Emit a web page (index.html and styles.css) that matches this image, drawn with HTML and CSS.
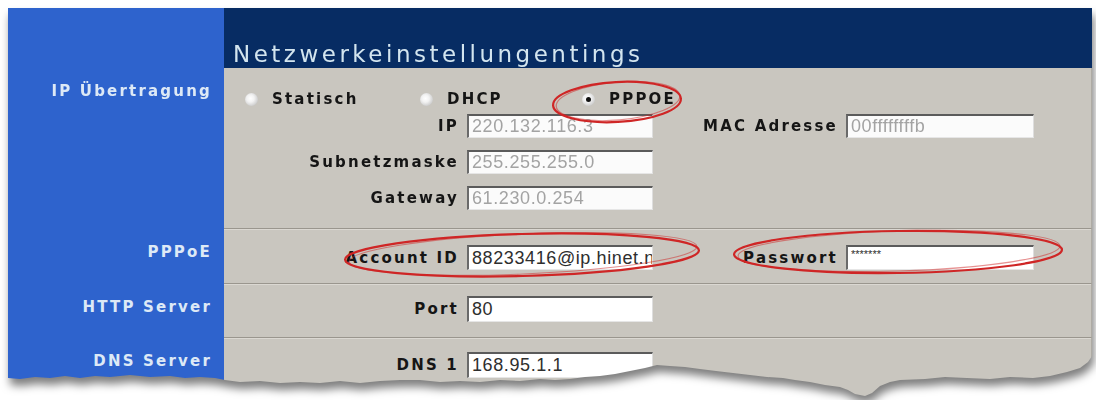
FILE: index.html
```html
<!DOCTYPE html>
<html lang="de">
<head>
<meta charset="utf-8">
<title>Netzwerkeinstellungen</title>
<link rel="stylesheet" href="styles.css">
</head>
<body>
<div class="page">
  <div class="shadow">
    <div class="card">
      <div class="side"></div>
      <div class="main head"><h1 class="title">Netzwerkeinstellungentings</h1></div>

      <div class="side"><span class="side-label ip-label">IP Übertragung</span></div>
      <div class="main ip">
        <div class="radios">
          <label class="radio r1"><span class="dot"></span>Statisch</label>
          <label class="radio r2"><span class="dot"></span>DHCP</label>
          <label class="radio r3"><span class="dot on"></span>PPPOE</label>
        </div>
        <div class="fields">
          <div class="frow">
            <span class="lbl">IP</span>
            <input class="inp dim" type="text" value="220.132.116.3" readonly>
            <span class="lbl">MAC Adresse</span>
            <input class="inp dim" type="text" value="00ffffffffb" readonly>
          </div>
          <div class="frow">
            <span class="lbl">Subnetzmaske</span>
            <input class="inp dim" type="text" value="255.255.255.0" readonly>
          </div>
          <div class="frow">
            <span class="lbl">Gateway</span>
            <input class="inp dim" type="text" value="61.230.0.254" readonly>
          </div>
        </div>
      </div>

      <div class="side"><span class="side-label">PPPoE</span></div>
      <div class="main sep pppoe">
        <div class="frow tall">
          <span class="lbl">Account ID</span>
          <input class="inp" type="text" value="88233416@ip.hinet.net" readonly>
          <span class="lbl">Passwort</span>
          <input class="inp pw" type="text" value="*******" readonly>
        </div>
      </div>

      <div class="side"><span class="side-label">HTTP Server</span></div>
      <div class="main sep http">
        <div class="frow taller">
          <span class="lbl">Port</span>
          <input class="inp" type="text" value="80" readonly>
        </div>
      </div>

      <div class="side"><span class="side-label">DNS Server</span></div>
      <div class="main sep dns">
        <div class="frow taller">
          <span class="lbl">DNS 1</span>
          <input class="inp" type="text" value="168.95.1.1" readonly>
        </div>
      </div>

      <svg class="marks" width="1084" height="392" viewBox="0 0 1084 392" aria-hidden="true">
        <g fill="none" stroke="#cf2626">
          <ellipse cx="609" cy="94" rx="64" ry="20" stroke-width="2.2" transform="rotate(-3 609 94)"/>
          <ellipse cx="610" cy="93" rx="62" ry="19" stroke-width="1.2" transform="rotate(-5 610 93)" stroke-opacity="0.5"/>
          <ellipse cx="514" cy="247" rx="177" ry="21" stroke-width="2.2" transform="rotate(-1.5 514 247)"/>
          <ellipse cx="515" cy="246" rx="174" ry="20" stroke-width="1.2" transform="rotate(-2.5 515 246)" stroke-opacity="0.5"/>
          <ellipse cx="890" cy="244" rx="164" ry="21" stroke-width="2.2" transform="rotate(-0.8 890 244)"/>
          <ellipse cx="891" cy="243" rx="161" ry="20" stroke-width="1.2" transform="rotate(-1.8 891 243)" stroke-opacity="0.5"/>
        </g>
      </svg>
    </div>
  </div>
</div>
</body>
</html>
```
FILE: styles.css
```css
html, body {
  margin: 0;
  padding: 0;
  background: #ffffff;
}

.page {
  padding: 8px 4px 0 8px;
  width: 1084px;
}

.shadow {
  filter: drop-shadow(2px 7px 4px rgba(0, 0, 0, 0.5));
}

.card {
  position: relative;
  width: 1084px;
  height: 392px;
  display: grid;
  grid-template-columns: 216px 868px;
  grid-template-rows: 60px 160px 55px 54px 63px;
  font-family: "DejaVu Sans", Verdana, sans-serif;
  clip-path: polygon(
    0 0, 1084px 0, 1084px 348px,
    1080px 354px, 1072px 360px, 1059px 364px, 1042px 368px, 1025px 370px,
    1002px 369px, 982px 371px, 959px 370px, 937px 369px, 917px 371px,
    892px 372px, 882px 374px, 872px 378px, 864px 385px, 857px 388px,
    847px 386px, 840px 382px, 832px 379px, 817px 377px, 802px 374px,
    787px 372px, 775px 370px, 759px 369px, 742px 367px, 725px 365px,
    708px 363px, 692px 361px, 677px 359px, 662px 358px, 649px 357px,
    637px 360px, 622px 363px, 607px 366px, 592px 368px, 577px 369px,
    562px 371px, 547px 372px, 532px 371px, 512px 373px, 492px 372px,
    472px 374px, 452px 373px, 432px 374px, 412px 372px, 392px 372px,
    372px 373px, 352px 375px, 332px 373px, 312px 375px, 292px 374px,
    272px 375px, 252px 373px, 232px 374px, 217px 372px, 207px 370px,
    192px 369px, 177px 370px, 162px 368px, 142px 369px, 122px 367px,
    102px 369px, 87px 368px, 72px 370px, 57px 368px, 42px 370px,
    27px 369px, 12px 371px, 0 370px
  );
}

.side {
  background: #2e63cd;
  text-align: right;
  padding-right: 12px;
  padding-top: 14px;
}

.side-label {
  display: block;
  color: #dde9f6;
  font-weight: bold;
  font-size: 15px;
  line-height: 20px;
  letter-spacing: 2.2px;
}

.ip-label {
  margin-top: -1px;
}

.main {
  background: #c9c6bf;
  border-right: 1px solid #aeaba4;
}

.head {
  background: #072c63;
  border-right: none;
  padding-top: 32px;
  padding-left: 9px;
}

.title {
  margin: 0;
  font-weight: normal;
  font-size: 23px;
  line-height: 28px;
  letter-spacing: 3.5px;
  color: #d3e5ef;
  white-space: nowrap;
}

.sep {
  border-top: 1px solid #9a968e;
  box-shadow: inset 0 1px 0 #dbd8d2;
}

.ip {
  padding-top: 18px;
}

.pppoe { padding-top: 16px; }
.http { padding-top: 12px; }
.dns { padding-top: 14px; }

.radios {
  display: flex;
  align-items: center;
  height: 26px;
  padding-left: 21px;
  margin-bottom: 2px;
}

.radio {
  display: flex;
  align-items: center;
  font-weight: bold;
  font-size: 15px;
  letter-spacing: 2.2px;
  color: #151515;
}

.r1 { width: 175px; }
.r2 { width: 162px; }

.dot {
  position: relative;
  width: 13px;
  height: 13px;
  border-radius: 50%;
  margin-right: 14px;
  background: radial-gradient(circle at 42% 42%, #ffffff 0, #f2f2f2 35%, #cfcfcf 70%, #a4a4a4 100%);
}

.dot.on::after {
  content: "";
  position: absolute;
  left: 4px;
  top: 4px;
  width: 5px;
  height: 5px;
  border-radius: 50%;
  background: #111111;
}

.fields {
  display: flex;
  flex-direction: column;
  gap: 12px;
}

.frow {
  display: grid;
  grid-template-columns: 243px 186px 193px 188px;
  align-items: center;
  height: 24px;
}

.frow.tall { height: 25px; }
.frow.taller { height: 26px; }

.lbl {
  text-align: right;
  padding-right: 8px;
  font-weight: bold;
  font-size: 15px;
  letter-spacing: 2.2px;
  color: #151515;
  white-space: nowrap;
}

.inp {
  box-sizing: border-box;
  width: 100%;
  height: 100%;
  margin: 0;
  padding: 0 0 0 3px;
  border-top: 2px solid #5b5b5b;
  border-left: 2px solid #6a6a6a;
  border-right: 1px solid #dedede;
  border-bottom: 1px solid #e6e6e6;
  border-radius: 0;
  background: #ffffff;
  font-family: "Liberation Sans", Arial, sans-serif;
  font-size: 18px;
  letter-spacing: 0.6px;
  color: #2e2e2e;
  outline: none;
}

.inp.dim {
  color: #a3a3a3;
  background: #fbfbfb;
}

.inp.pw {
  font-size: 11px;
  letter-spacing: 0;
  padding-bottom: 8px;
}

.marks {
  position: absolute;
  left: 0;
  top: 0;
  pointer-events: none;
}
```
